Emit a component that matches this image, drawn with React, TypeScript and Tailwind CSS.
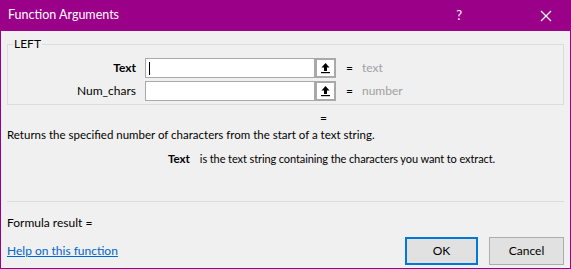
import React from "react";

const F = { fontFamily: '"Segoe UI", Lato, "Noto Sans", sans-serif' };

function RefBtn() {
  return (
    <div className="w-[21px] h-[20px] border-2 border-[#a9a9a9] bg-white flex items-center justify-center">
      <svg width="11" height="12" viewBox="0 0 11 12">
        <path d="M5.5 1 L9.5 5.5 L7 5.5 L7 9 L4 9 L4 5.5 L1.5 5.5 Z" fill="#000" />
        <rect x="1" y="10" width="9" height="1.2" fill="#000" />
      </svg>
    </div>
  );
}

function Row({ label, bold, hint, caret }: { label: string; bold?: boolean; hint: string; caret?: boolean }) {
  return (
    <div className="flex items-center h-[20px]">
      <div className={`w-[128px] text-right text-[12px] text-black ${bold ? "font-bold" : ""}`}>{label}</div>
      <div className="ml-[9px] w-[170px] h-[20px] border border-[#a9a9a9] bg-white flex items-center pl-[3px]">
        {caret && <div className="w-px h-[13px] bg-black" />}
      </div>
      <RefBtn />
      <div className="ml-[10px] text-[12px] text-black">=</div>
      <div className="ml-[9px] text-[12px] text-[#a0a0a0]">{hint}</div>
    </div>
  );
}

export default function App() {
  return (
    <div className="w-[571px] h-[269px] bg-[#9b0089] flex flex-col" style={F}>
      <div className="h-[31px] flex items-center pl-[8px] text-white text-[12.5px] shrink-0">
        <span>Function Arguments</span>
        <span className="ml-auto mr-[78px] text-[13px]">?</span>
        <svg width="12" height="12" viewBox="0 0 12 12" className="mr-[19px]">
          <path d="M1 1 L11 11 M11 1 L1 11" stroke="#fff" strokeWidth="1.2" />
        </svg>
      </div>
      <div className="flex-1 mx-px mb-px bg-[#f0f0f0] flex flex-col px-[6px]">
        <fieldset className="mt-[5px] border border-[#dcdcdc] pt-[6px] pb-[3px] flex flex-col gap-[3px]">
          <legend className="ml-[5px] px-px text-[12px] leading-[16px] text-black">LEFT</legend>
          <Row label="Text" bold hint="text" caret />
          <Row label="Num_chars" hint="number" />
        </fieldset>
        <div className="mt-[5px] h-[16px] leading-[16px] text-[12px] text-black pl-[313px]">=</div>
        <div className="mt-[1px] h-[16px] leading-[16px] text-[11.5px] text-black">
          Returns the specified number of characters from the start of a text string.
        </div>
        <div className="mt-[8px] h-[16px] leading-[16px] text-[11.5px] text-black pl-[161px] flex">
          <span className="font-bold">Text</span>
          <span className="ml-[10px] text-[11px] tracking-[-0.1px]">is the text string containing the characters you want to extract.</span>
        </div>
        <div className="mt-[34px] h-px bg-[#dcdcdc]" />
        <div className="mt-[13px] h-[16px] leading-[16px] text-[12px] text-black">Formula result =</div>
        <div className="mt-[3px] flex items-start">
          <span className="text-[12px] leading-[16px] text-[#0066cc] underline mt-[9px]">Help on this function</span>
          <div className="ml-auto mt-[3px] flex gap-[11px]">
            <button className="w-[73px] h-[28px] border-2 border-[#0078d7] bg-[#e1e1e1] text-[12px] text-black">OK</button>
            <button className="w-[75px] h-[28px] border border-[#adadad] bg-[#e1e1e1] text-[12px] text-black">Cancel</button>
          </div>
        </div>
      </div>
    </div>
  );
}
